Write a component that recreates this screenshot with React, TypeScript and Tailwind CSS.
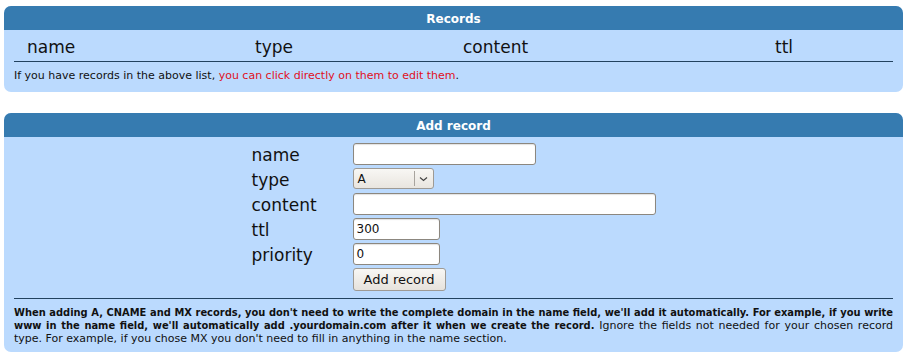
import React from "react";

const font = { fontFamily: '"DejaVu Sans", Verdana, sans-serif' };

function Input({ w, value }: { w: string; value?: string }) {
  return (
    <div
      className={`${w} h-[22px] bg-white border border-[#8c877f] rounded-[3px] shadow-[inset_0_1px_1px_rgba(0,0,0,0.12)] flex items-center px-[3px] text-[12px] text-[#111]`}
    >
      {value}
    </div>
  );
}

export default function App() {
  return (
    <div className="bg-white w-[907px] h-[360px] px-[4px] pt-[6px]" style={font}>
      {/* Records panel */}
      <div className="rounded-[7px] overflow-hidden bg-[#bbdafe]">
        <div className="h-[24px] bg-[#367bb0] flex items-center justify-center pt-[1px] text-white font-bold text-[12px]">
          Records
        </div>
        <div className="px-[10px] pb-[10px]">
          <div className="h-[32px] pt-[5px] border-b border-[#22425f] grid grid-cols-[228px_208px_312px_1fr] items-center pl-[13px] text-[17px] text-[#111]">
            <span>name</span>
            <span>type</span>
            <span>content</span>
            <span>ttl</span>
          </div>
          <p className="mt-[7px] text-[11px] leading-[13px] text-[#111]">
            If you have records in the above list,{" "}
            <span className="text-[#e0101c]">you can click directly on them to edit them</span>.
          </p>
        </div>
      </div>

      {/* Add record panel */}
      <div className="mt-[21px] rounded-[7px] overflow-hidden bg-[#bbdafe]">
        <div className="h-[24px] bg-[#367bb0] flex items-center justify-center pt-[1px] text-white font-bold text-[12px]">
          Add record
        </div>
        <div className="px-[10px] pb-[7px]">
          <div className="pt-[6px] pb-[7px] border-b border-[#22425f] flex justify-center">
            <div className="grid grid-cols-[101px_303px] gap-y-[3px] text-[17px] text-[#111]">
              <div className="h-[22px] pt-[3px] flex items-center">name</div>
              <div><Input w="w-[183px]" /></div>
              <div className="h-[22px] pt-[3px] flex items-center">type</div>
              <div>
                <div className="w-[81px] h-[21px] flex items-center border border-[#9e9a94] rounded-[3px] bg-gradient-to-b from-[#f8f7f4] to-[#e9e5df] text-[12px]">
                  <span className="flex-1 pl-[4px]">A</span>
                  <span className="w-[19px] h-[15px] border-l border-[#a8a49e] flex items-center justify-center">
                    <svg width="9" height="6" viewBox="0 0 9 6">
                      <path d="M1 1.5 L4.5 4.5 L8 1.5" fill="none" stroke="#444" strokeWidth="1.2" />
                    </svg>
                  </span>
                </div>
              </div>
              <div className="h-[22px] pt-[3px] flex items-center">content</div>
              <div><Input w="w-[303px]" /></div>
              <div className="h-[22px] pt-[3px] flex items-center">ttl</div>
              <div><Input w="w-[87px]" value="300" /></div>
              <div className="h-[22px] pt-[3px] flex items-center">priority</div>
              <div><Input w="w-[87px]" value="0" /></div>
              <div />
              <div>
                <div className="w-[93px] h-[23px] flex items-center justify-center border border-[#9e9a94] rounded-[3px] bg-gradient-to-b from-[#f8f7f4] to-[#e6e2dc] text-[13px] text-[#111]">
                  Add record
                </div>
              </div>
            </div>
          </div>
          <p className="pt-[7px] text-[11px] leading-[13px] text-[#111] text-justify">
            <b className="font-stretch-condensed">
              When adding A, CNAME and MX records, you don't need to write the complete domain in the name field, we'll add it automatically. For example, if you write www in the name field, we'll automatically add .yourdomain.com after it when we create the record.
            </b>{" "}
            Ignore the fields not needed for your chosen record type. For example, if you chose MX you don't need to fill in anything in the name section.
          </p>
        </div>
      </div>
    </div>
  );
}
